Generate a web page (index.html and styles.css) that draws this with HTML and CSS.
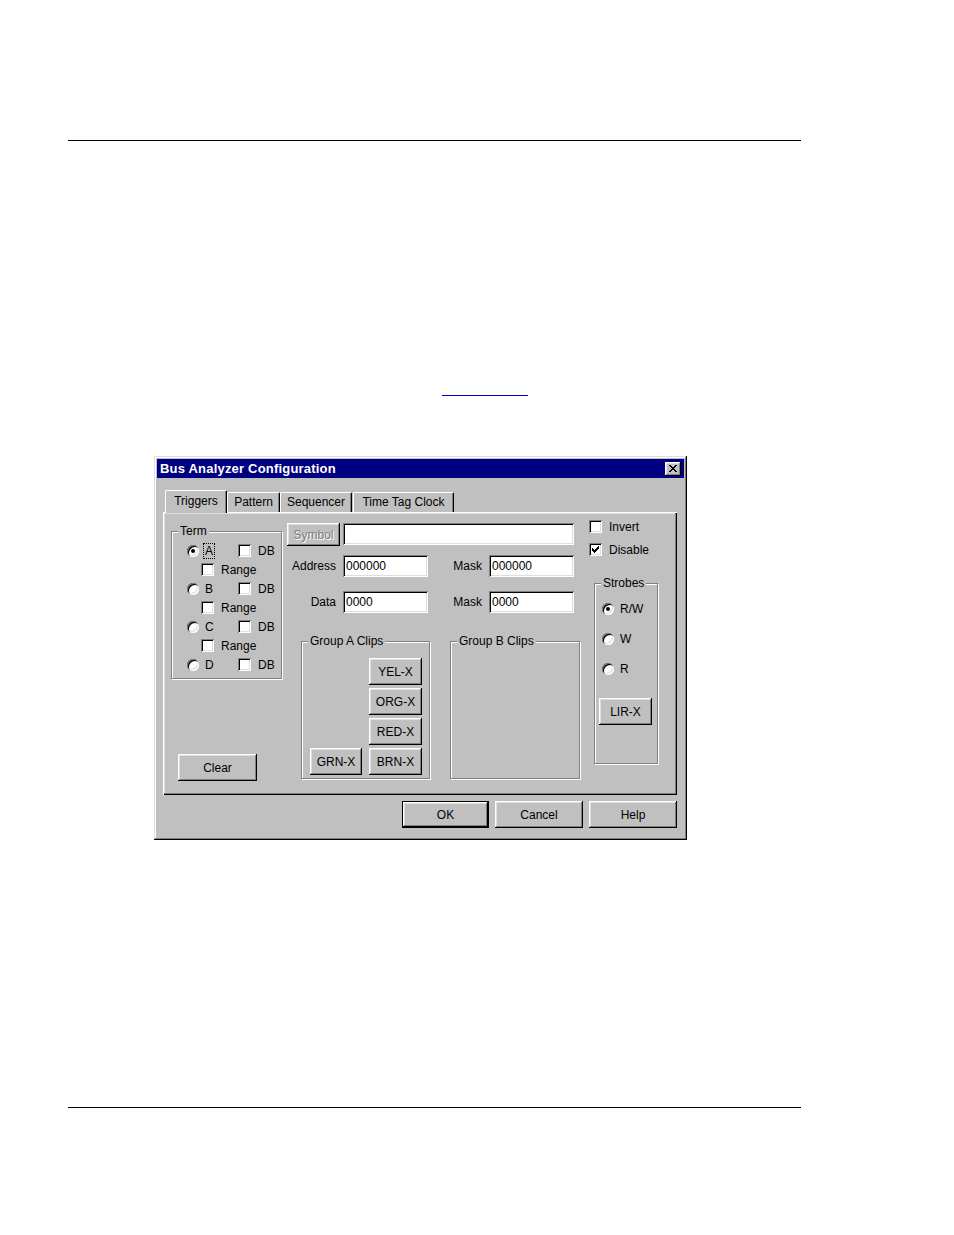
FILE: index.html
```html
<!DOCTYPE html>
<html>
  <head>
    <meta charset="UTF-8" />
    <title>Bus Analyzer Configuration</title>
    <link rel="stylesheet" href="styles.css">
  </head>
  <body>
    <div class="rule rule-top"></div>
    <div class="link-line"></div>

    <div class="dialog">
      <div class="titlebar">
        <span class="title">Bus Analyzer Configuration</span>
        <button class="close-btn">
          <svg width="16" height="14" viewBox="0 0 16 14" shape-rendering="crispEdges">
            <path fill="#000" d="M4 3h2v1h-2z M10 3h2v1h-2z M5 4h2v1h-2z M9 4h2v1h-2z M6 5h4v1h-4z M7 6h2v1h-2z M6 7h4v1h-4z M5 8h2v1h-2z M9 8h2v1h-2z M4 9h2v1h-2z M10 9h2v1h-2z" />
          </svg>
        </button>
      </div>

      <div class="dialog-body">
        <div class="tabs">
          <div class="tab tab-active tab-triggers">Triggers</div>
          <div class="tab tab-pattern">Pattern</div>
          <div class="tab tab-sequencer">Sequencer</div>
          <div class="tab tab-clock">Time Tag Clock</div>
        </div>

        <div class="panel">
          <div class="col col-term">
            <fieldset class="group group-term">
              <legend>Term</legend>
              <div class="term-rows">
                <div class="term-row">
                  <span class="radio checked"></span>
                  <span class="term-key"><span class="term-name focus">A</span></span>
                  <span class="check"></span>
                  <span class="check-label">DB</span>
                </div>
                <div class="range-row">
                  <span class="check"></span>
                  <span class="check-label">Range</span>
                </div>
                <div class="term-row">
                  <span class="radio"></span>
                  <span class="term-key"><span class="term-name">B</span></span>
                  <span class="check"></span>
                  <span class="check-label">DB</span>
                </div>
                <div class="range-row">
                  <span class="check"></span>
                  <span class="check-label">Range</span>
                </div>
                <div class="term-row">
                  <span class="radio"></span>
                  <span class="term-key"><span class="term-name">C</span></span>
                  <span class="check"></span>
                  <span class="check-label">DB</span>
                </div>
                <div class="range-row">
                  <span class="check"></span>
                  <span class="check-label">Range</span>
                </div>
                <div class="term-row">
                  <span class="radio"></span>
                  <span class="term-key"><span class="term-name">D</span></span>
                  <span class="check"></span>
                  <span class="check-label">DB</span>
                </div>
              </div>
            </fieldset>
            <button class="btn btn-clear">Clear</button>
          </div>

          <div class="col col-main">
            <div class="symbol-row">
              <button class="btn btn-symbol" disabled>Symbol</button>
              <input class="field field-symbol" type="text" value="">
            </div>
            <div class="field-row row-address">
              <label class="field-label">Address</label>
              <input class="field field-short" type="text" value="000000">
              <label class="field-label mask-label">Mask</label>
              <input class="field field-short" type="text" value="000000">
            </div>
            <div class="field-row row-data">
              <label class="field-label">Data</label>
              <input class="field field-short" type="text" value="0000">
              <label class="field-label mask-label">Mask</label>
              <input class="field field-short" type="text" value="0000">
            </div>

            <div class="clip-groups">
              <fieldset class="group group-a">
                <legend>Group A Clips</legend>
                <div class="clip-grid">
                  <button class="btn clip clip-right">YEL-X</button>
                  <button class="btn clip clip-right">ORG-X</button>
                  <button class="btn clip clip-right">RED-X</button>
                  <button class="btn clip">GRN-X</button>
                  <button class="btn clip">BRN-X</button>
                </div>
              </fieldset>
              <fieldset class="group group-b">
                <legend>Group B Clips</legend>
              </fieldset>
            </div>
          </div>

          <div class="col col-side">
            <div class="check-row">
              <span class="check"></span>
              <span class="check-label">Invert</span>
            </div>
            <div class="check-row">
              <span class="check">
                <svg width="13" height="13" viewBox="0 0 13 13" shape-rendering="crispEdges">
                  <path fill="#000" d="M9 3h1v1h-1z M8 4h2v1h-2z M3 5h1v1h-1z M7 5h3v1h-3z M3 6h2v1h-2z M6 6h3v1h-3z M3 7h5v1h-5z M4 8h3v1h-3z M5 9h1v1h-1z" />
                </svg>
              </span>
              <span class="check-label">Disable</span>
            </div>

            <fieldset class="group group-strobes">
              <legend>Strobes</legend>
              <div class="strobe-rows">
                <div class="strobe-row"><span class="radio checked"></span><span class="radio-label">R/W</span></div>
                <div class="strobe-row"><span class="radio"></span><span class="radio-label">W</span></div>
                <div class="strobe-row"><span class="radio"></span><span class="radio-label">R</span></div>
                <button class="btn btn-lir">LIR-X</button>
              </div>
            </fieldset>
          </div>
        </div>

        <div class="footer">
          <button class="btn btn-footer btn-default">OK</button>
          <button class="btn btn-footer">Cancel</button>
          <button class="btn btn-footer">Help</button>
        </div>
      </div>
    </div>

    <div class="rule rule-bottom"></div>
  </body>
</html>
```

FILE: styles.css
```css
body {
  margin: 0;
  background: #fff;
  font-family: "Liberation Sans", Arial, sans-serif;
  font-size: 12px;
  color: #000;
}
button,
input {
  font: inherit;
  color: #000;
}
.rule {
  width: 733px;
  height: 1px;
  margin-left: 68px;
  background: #000;
}
.rule-top {
  margin-top: 140px;
}
.rule-bottom {
  margin-top: 267px;
}
.link-line {
  width: 86px;
  height: 1px;
  margin: 254px 0 0 442px;
  background: #0000c8;
}

/* window */
.dialog {
  box-sizing: border-box;
  width: 533px;
  height: 384px;
  margin: 60px 0 0 154px;
  padding: 3px;
  background: #c0c0c0;
  box-shadow: inset -1px -1px #000, inset 1px 1px #dfdfdf,
    inset -2px -2px #808080, inset 2px 2px #fff;
}
.titlebar {
  display: flex;
  align-items: center;
  justify-content: space-between;
  height: 19px;
  padding: 0 3px 0 3px;
  background: #000080;
  color: #fff;
}
.title {
  font-weight: bold;
  font-size: 13px;
  letter-spacing: 0.2px;
}
.close-btn {
  display: flex;
  width: 16px;
  height: 14px;
  padding: 0;
  border: 0;
  background: #c0c0c0;
  box-shadow: inset -1px -1px #000, inset 1px 1px #fff,
    inset -2px -2px #808080, inset 2px 2px #dfdfdf;
}
.dialog-body {
  padding: 12px 0 0 6px;
}

/* tabs */
.tabs {
  display: flex;
  align-items: flex-end;
  height: 22px;
  margin-left: 2px;
}
.tab {
  box-sizing: border-box;
  height: 20px;
  line-height: 19px;
  text-align: center;
  border-top: 1px solid #fff;
  border-left: 1px solid #fff;
  border-right: 1px solid #000;
  border-radius: 2px 2px 0 0;
  box-shadow: inset -1px 0 #808080;
  background: #c0c0c0;
}
.tab-active {
  position: relative;
  z-index: 1;
  height: 23px;
  line-height: 21px;
  margin-bottom: -1px;
}
.tab-triggers {
  width: 62px;
}
.tab-pattern {
  width: 53px;
}
.tab-sequencer {
  width: 72px;
}
.tab-clock {
  width: 101px;
  margin-left: 1px;
}
.panel {
  box-sizing: border-box;
  display: flex;
  align-items: flex-start;
  width: 514px;
  height: 283px;
  padding-left: 8px;
  box-shadow: inset 1px 1px #fff, inset -1px -1px #000,
    inset -2px -2px #808080, inset 2px 2px #dfdfdf;
}

/* group boxes */
.group {
  box-sizing: border-box;
  margin: 0;
  padding: 0;
  border: 1px solid #808080;
  box-shadow: inset 1px 1px #fff, 1px 1px #fff;
  min-inline-size: 0;
}
.group legend {
  margin-left: 6px;
  padding: 0 2px;
  line-height: 14px;
  background: #c0c0c0;
}

/* buttons */
.btn {
  box-sizing: border-box;
  height: 27px;
  padding: 0;
  border: 0;
  background: #c0c0c0;
  box-shadow: inset -1px -1px #000, inset 1px 1px #fff,
    inset -2px -2px #808080, inset 2px 2px #dfdfdf;
}
.btn-default {
  border: 1px solid #000;
}

/* checkboxes and radios */
.check {
  box-sizing: border-box;
  display: block;
  flex: none;
  width: 13px;
  height: 13px;
  background: #fff;
  box-shadow: inset 1px 1px #808080, inset -1px -1px #fff,
    inset 2px 2px #000, inset -2px -2px #dfdfdf;
}
.check svg {
  display: block;
}
.check-label {
  margin-left: 7px;
}
.radio {
  position: relative;
  display: block;
  flex: none;
  width: 12px;
  height: 12px;
  border-radius: 50%;
  background: #fff;
  box-shadow: inset 1px 1px #808080, inset -1px -1px #fff,
    inset 2px 2px #000, inset -2px -2px #dfdfdf;
}
.radio.checked::after {
  content: "";
  position: absolute;
  left: 4px;
  top: 4px;
  width: 4px;
  height: 4px;
  border-radius: 50%;
  background: #000;
}

/* term column */
.col-term {
  width: 111px;
  margin-top: 12px;
}
.group-term {
  width: 111px;
}
.term-rows {
  padding: 3px 0 4px 0;
}
.term-row {
  display: grid;
  grid-template-columns: 12px 39px 13px auto;
  align-items: center;
  height: 19px;
  padding-left: 15px;
}
.term-name {
  margin-left: 5px;
  padding: 0 1px;
}
.focus {
  outline: 1px dotted #000;
}
.range-row {
  display: flex;
  align-items: center;
  height: 19px;
  padding-left: 29px;
}
.btn-clear {
  width: 79px;
  margin: 75px 0 0 7px;
}

/* main column */
.col-main {
  width: 293px;
  margin: 11px 0 0 5px;
}
.symbol-row {
  display: flex;
  align-items: flex-start;
}
.btn-symbol {
  width: 53px;
  height: 23px;
  color: #808080;
  text-shadow: 1px 1px #fff;
}
.field {
  box-sizing: border-box;
  height: 22px;
  padding: 0 3px;
  border: 0;
  outline: none;
  background: #fff;
  box-shadow: inset 1px 1px #808080, inset -1px -1px #fff,
    inset 2px 2px #000, inset -2px -2px #dfdfdf;
}
.field-symbol {
  width: 231px;
  margin-left: 3px;
}
.field-short {
  width: 85px;
}
.field-row {
  display: flex;
  align-items: center;
}
.row-address {
  margin-top: 9px;
}
.row-data {
  margin-top: 14px;
}
.field-label {
  box-sizing: border-box;
  width: 56px;
  padding-right: 7px;
  text-align: right;
}
.mask-label {
  width: 61px;
}
.clip-groups {
  display: flex;
  margin-top: 21px;
}
.group-a {
  width: 129px;
  margin-left: 14px;
}
.group-b {
  width: 130px;
  margin-left: 20px;
}
.clip-grid {
  display: grid;
  grid-template-columns: 52px 53px;
  grid-auto-rows: 27px;
  column-gap: 7px;
  row-gap: 3px;
  padding: 10px 0 3px 8px;
}
.clip-right {
  grid-column: 2;
}

/* side column */
.col-side {
  margin: 8px 0 0 9px;
}
.check-row {
  display: flex;
  align-items: center;
  height: 13px;
  margin-bottom: 10px;
}
.group-strobes {
  width: 64px;
  margin: 20px 0 0 5px;
}
.strobe-rows {
  display: flex;
  flex-direction: column;
  padding: 12px 0 38px 0;
}
.strobe-row {
  display: flex;
  align-items: center;
  height: 14px;
  margin-bottom: 16px;
  padding-left: 7px;
}
.radio-label {
  margin-left: 6px;
}
.btn-lir {
  width: 53px;
  margin: 6px 0 0 4px;
}

/* footer */
.footer {
  display: flex;
  justify-content: flex-end;
  gap: 6px;
  width: 514px;
  margin-top: 6px;
}
.btn-footer {
  width: 88px;
}
.btn-footer.btn-default {
  width: 87px;
}
```
